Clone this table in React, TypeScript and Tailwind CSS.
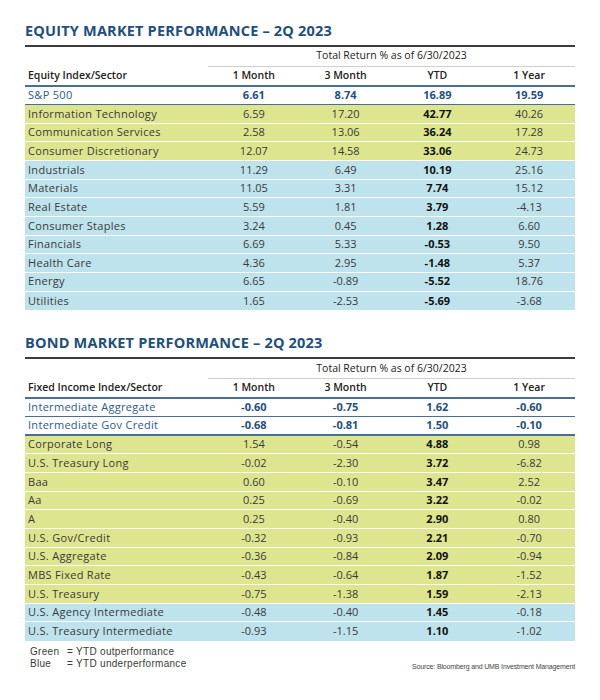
import React from 'react'

type Row = { name: string; m1: string; m3: string; ytd: string; y1: string; tone: 'g' | 'b' }

const equityTop = { name: 'S&P 500', m1: '6.61', m3: '8.74', ytd: '16.89', y1: '19.59' }

const equityRows: Row[] = [
  { name: 'Information Technology', m1: '6.59', m3: '17.20', ytd: '42.77', y1: '40.26', tone: 'g' },
  { name: 'Communication Services', m1: '2.58', m3: '13.06', ytd: '36.24', y1: '17.28', tone: 'g' },
  { name: 'Consumer Discretionary', m1: '12.07', m3: '14.58', ytd: '33.06', y1: '24.73', tone: 'g' },
  { name: 'Industrials', m1: '11.29', m3: '6.49', ytd: '10.19', y1: '25.16', tone: 'b' },
  { name: 'Materials', m1: '11.05', m3: '3.31', ytd: '7.74', y1: '15.12', tone: 'b' },
  { name: 'Real Estate', m1: '5.59', m3: '1.81', ytd: '3.79', y1: '-4.13', tone: 'b' },
  { name: 'Consumer Staples', m1: '3.24', m3: '0.45', ytd: '1.28', y1: '6.60', tone: 'b' },
  { name: 'Financials', m1: '6.69', m3: '5.33', ytd: '-0.53', y1: '9.50', tone: 'b' },
  { name: 'Health Care', m1: '4.36', m3: '2.95', ytd: '-1.48', y1: '5.37', tone: 'b' },
  { name: 'Energy', m1: '6.65', m3: '-0.89', ytd: '-5.52', y1: '18.76', tone: 'b' },
  { name: 'Utilities', m1: '1.65', m3: '-2.53', ytd: '-5.69', y1: '-3.68', tone: 'b' },
]

const bondTop = [
  { name: 'Intermediate Aggregate', m1: '-0.60', m3: '-0.75', ytd: '1.62', y1: '-0.60' },
  { name: 'Intermediate Gov Credit', m1: '-0.68', m3: '-0.81', ytd: '1.50', y1: '-0.10' },
]

const bondRows: Row[] = [
  { name: 'Corporate Long', m1: '1.54', m3: '-0.54', ytd: '4.88', y1: '0.98', tone: 'g' },
  { name: 'U.S. Treasury Long', m1: '-0.02', m3: '-2.30', ytd: '3.72', y1: '-6.82', tone: 'g' },
  { name: 'Baa', m1: '0.60', m3: '-0.10', ytd: '3.47', y1: '2.52', tone: 'g' },
  { name: 'Aa', m1: '0.25', m3: '-0.69', ytd: '3.22', y1: '-0.02', tone: 'g' },
  { name: 'A', m1: '0.25', m3: '-0.40', ytd: '2.90', y1: '0.80', tone: 'g' },
  { name: 'U.S. Gov/Credit', m1: '-0.32', m3: '-0.93', ytd: '2.21', y1: '-0.70', tone: 'g' },
  { name: 'U.S. Aggregate', m1: '-0.36', m3: '-0.84', ytd: '2.09', y1: '-0.94', tone: 'g' },
  { name: 'MBS Fixed Rate', m1: '-0.43', m3: '-0.64', ytd: '1.87', y1: '-1.52', tone: 'g' },
  { name: 'U.S. Treasury', m1: '-0.75', m3: '-1.38', ytd: '1.59', y1: '-2.13', tone: 'g' },
  { name: 'U.S. Agency Intermediate', m1: '-0.48', m3: '-0.40', ytd: '1.45', y1: '-0.18', tone: 'b' },
  { name: 'U.S. Treasury Intermediate', m1: '-0.93', m3: '-1.15', ytd: '1.10', y1: '-1.02', tone: 'b' },
]

const grid = 'grid grid-cols-[183px_1fr_1fr_1fr_1fr]'

function TableHead({ title, label }: { title: string; label: string }) {
  return (
    <>
      <h2 className="h-4 text-[14.5px] leading-4 font-bold tracking-[0.2px] text-[#1d4f80] mb-[6px]">
        {title}
      </h2>
      <div className="h-[2px] bg-[#3c3c3c]" />
      <div className={grid}>
        <div />
        <div className="col-span-4 h-[19.5px] flex items-center justify-center text-[10.5px] text-[#222] border-b border-[#cfcfcf]">
          Total Return % as of 6/30/2023
        </div>
      </div>
      <div className={`${grid} h-[18.5px] items-center text-[10.5px] font-semibold text-[#222]`}>
        <div className="pl-[3px]">{label}</div>
        <div className="text-center">1 Month</div>
        <div className="text-center">3 Month</div>
        <div className="text-center">YTD</div>
        <div className="text-center">1 Year</div>
      </div>
      <div className="h-[1.5px] bg-[#4a6e98]" />
    </>
  )
}

function BlueRow({ r }: { r: { name: string; m1: string; m3: string; ytd: string; y1: string } }) {
  return (
    <>
      <div className={`${grid} h-[17px] items-center text-[11px] text-[#2b5a8c]`}>
        <div className="pl-[3px] tracking-[0.3px]">{r.name}</div>
        <div className="text-center font-bold text-[#1f4f80]">{r.m1}</div>
        <div className="text-center font-bold text-[#1f4f80]">{r.m3}</div>
        <div className="text-center font-bold text-[#1f4f80]">{r.ytd}</div>
        <div className="text-center font-bold text-[#1f4f80]">{r.y1}</div>
      </div>
      <div className="h-[1.5px] bg-[#4a6e98]" />
    </>
  )
}

function DataRows({ rows }: { rows: Row[] }) {
  return (
    <div>
      {rows.map((r, i) => (
        <div
          key={r.name}
          className={`${grid} h-[18.67px] items-center text-[11px] text-[#3a3a3a] ${
            r.tone === 'g' ? 'bg-[#dde68f]' : 'bg-[#bee3ec]'
          } ${i < rows.length - 1 ? 'border-b border-white' : ''}`}
        >
          <div className="pl-[3px] tracking-[0.3px]">{r.name}</div>
          <div className="text-center">{r.m1}</div>
          <div className="text-center">{r.m3}</div>
          <div className="text-center font-bold text-[#111]">{r.ytd}</div>
          <div className="text-center">{r.y1}</div>
        </div>
      ))}
    </div>
  )
}

export default function App() {
  return (
    <div
      className="w-[600px] h-[700px] bg-white px-[25px] pt-[23px]"
      style={{ fontFamily: '"Open Sans", "Liberation Sans", sans-serif' }}
    >
      {/* equity */}
      <TableHead title="EQUITY MARKET PERFORMANCE – 2Q 2023" label="Equity Index/Sector" />
      <BlueRow r={equityTop} />
      <DataRows rows={equityRows} />

      {/* bonds */}
      <div className="mt-[25px]">
        <TableHead title="BOND MARKET PERFORMANCE – 2Q 2023" label="Fixed Income Index/Sector" />
        {bondTop.map((r) => (
          <BlueRow key={r.name} r={r} />
        ))}
        <DataRows rows={bondRows} />
      </div>

      {/* legend */}
      <div className="flex justify-between items-start mt-[5px]">
        <div
          className="pl-[5px] text-[10px] leading-[11.7px] tracking-[0.3px] text-[#3a3a3a] grid grid-cols-[37px_1fr]"
          style={{ fontFamily: '"Liberation Sans", sans-serif' }}
        >
          <span>Green</span>
          <span>= YTD outperformance</span>
          <span>Blue</span>
          <span>= YTD underperformance</span>
        </div>
        <div
          className="mt-[16px] text-[7px] leading-[9px] tracking-[-0.15px] text-[#444]"
          style={{ fontFamily: '"Liberation Sans Narrow", "Liberation Sans", sans-serif' }}
        >
          Source: Bloomberg and UMB Investment Management
        </div>
      </div>
    </div>
  )
}
